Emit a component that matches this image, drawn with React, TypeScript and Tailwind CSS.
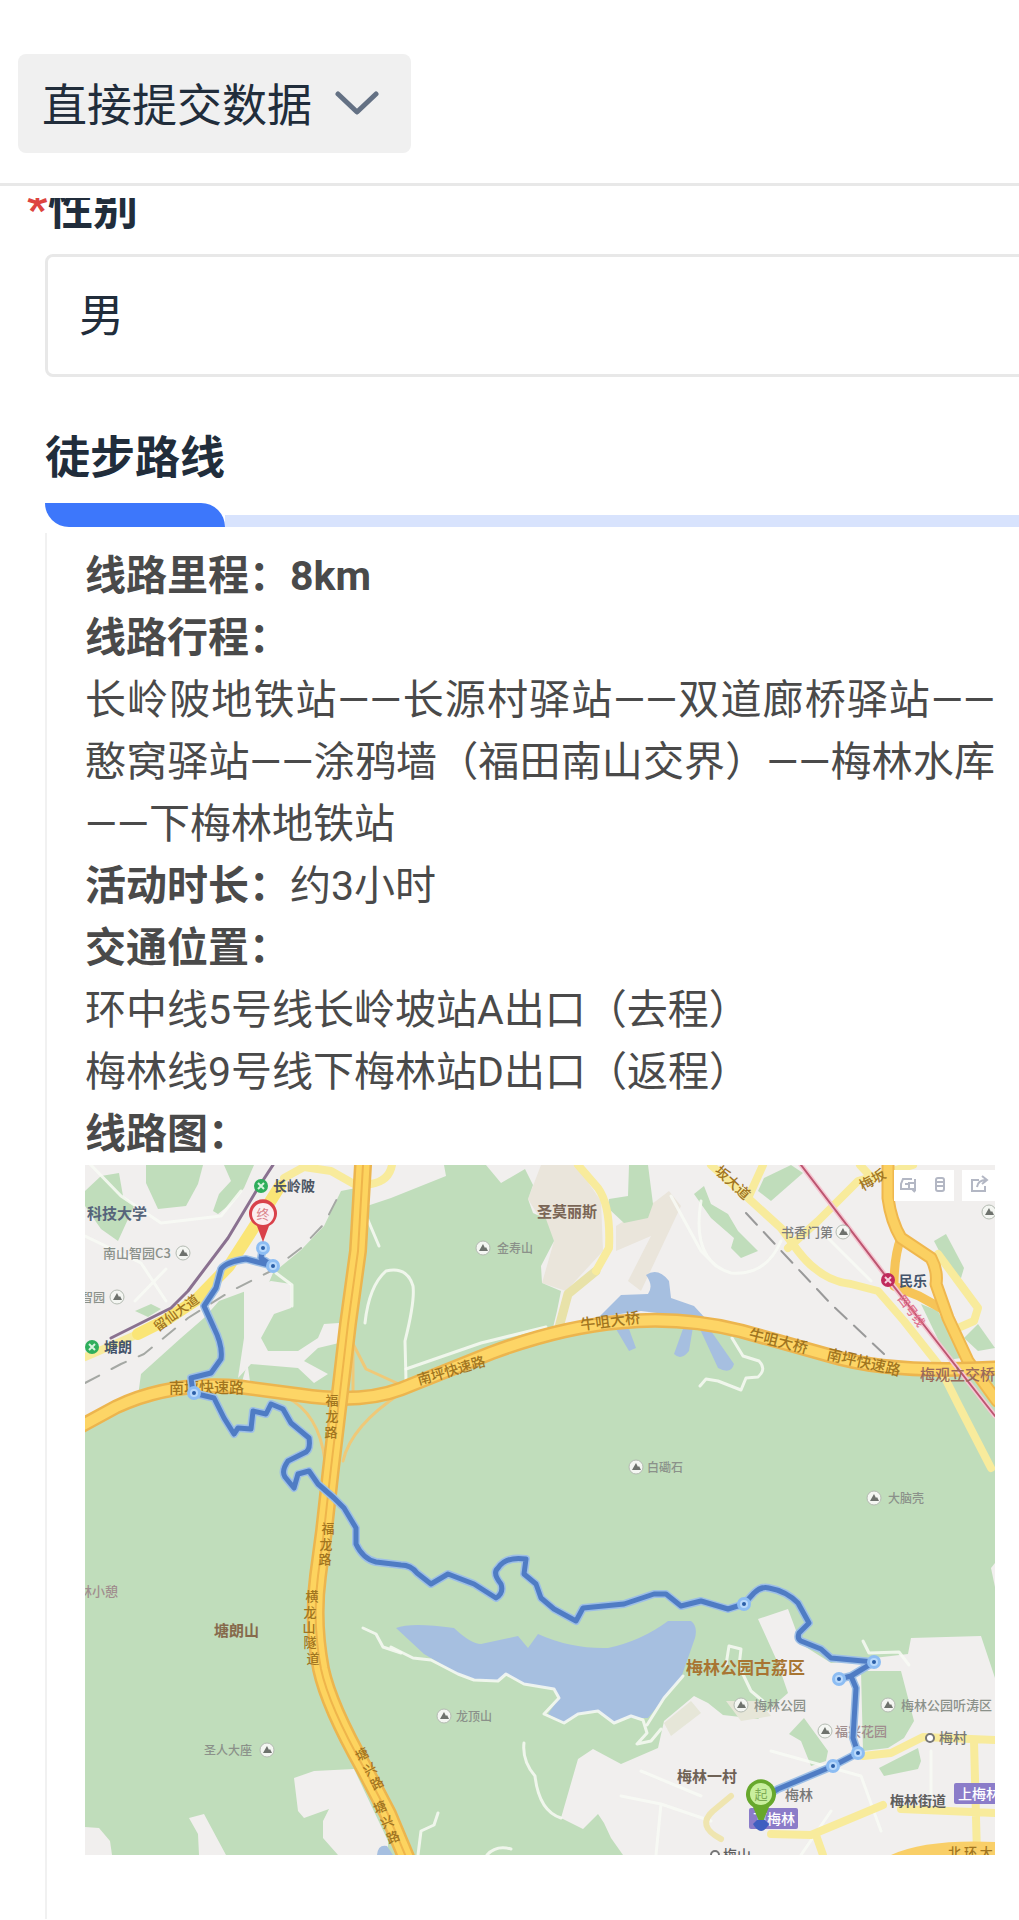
import { useState } from "react"

type Point = [number, number]

type MapLabel = {
  text: string;
  x: number;
  y: number;
  size: number;
  color: string;
  bold?: boolean;
  rotate?: number;
}

const GREEN = "#c0ddbb";
const URBAN = "#f1efee";
const GREY = "#8b918a";
const BROWN = "#a1751f";

const labels: MapLabel[] = [
  { text: "长岭陂", x: 272, y: 1190, size: 14, color: "#4c5563", bold: true },
  { text: "科技大学", x: 86, y: 1218, size: 15, color: "#56647a", bold: true },
  { text: "南山智园C3", x: 102, y: 1257, size: 13, color: GREY },
  { text: "智园", x: 80, y: 1301, size: 12, color: GREY },
  { text: "塘朗", x: 103, y: 1351, size: 14, color: "#44546b", bold: true },
  { text: "圣莫丽斯", x: 536, y: 1216, size: 15, color: "#7a6656", bold: true },
  { text: "金寿山", x: 496, y: 1252, size: 12, color: GREY },
  { text: "白磡石", x: 646, y: 1471, size: 12, color: GREY },
  { text: "大脑壳", x: 887, y: 1502, size: 12, color: GREY },
  { text: "民乐", x: 898, y: 1285, size: 14, color: "#44546b", bold: true },
  { text: "书香门第", x: 780, y: 1236, size: 13, color: "#7d7d7d" },
  { text: "梅观立交桥", x: 919, y: 1379, size: 15, color: "#9a6a5a" },
  { text: "林小憩", x: 78, y: 1595, size: 13, color: "#a08e8e" },
  { text: "塘朗山", x: 213, y: 1635, size: 15, color: "#866a4c", bold: true },
  { text: "圣人大座", x: 203, y: 1754, size: 12, color: GREY },
  { text: "龙顶山", x: 455, y: 1720, size: 12, color: GREY },
  { text: "梅林公园古荔区", x: 685, y: 1673, size: 17, color: "#a87532", bold: true },
  { text: "梅林公园", x: 753, y: 1709, size: 13, color: GREY },
  { text: "梅林公园听涛区", x: 900, y: 1709, size: 13, color: GREY },
  { text: "福兴花园", x: 834, y: 1735, size: 13, color: "#a08e8e" },
  { text: "梅村", x: 938, y: 1742, size: 14, color: "#777777" },
  { text: "梅林一村", x: 676, y: 1781, size: 15, color: "#6f6256", bold: true },
  { text: "梅林", x: 784, y: 1799, size: 14, color: "#777777" },
  { text: "梅林街道", x: 889, y: 1805, size: 14, color: "#5e5e5e", bold: true },
  { text: "梅山", x: 722, y: 1859, size: 14, color: "#5e5e5e" },
  { text: "北 环 大", x: 947, y: 1856, size: 13, color: BROWN },
  { text: "南坪快速路", x: 168, y: 1392, size: 15, color: BROWN },
  { text: "南坪快速路", x: 418, y: 1384, size: 14, color: BROWN, rotate: -16 },
  { text: "牛咀大桥", x: 580, y: 1329, size: 15, color: BROWN, rotate: -7 },
  { text: "牛咀大桥", x: 747, y: 1338, size: 15, color: BROWN, rotate: 14 },
  { text: "南坪快速路", x: 825, y: 1358, size: 15, color: BROWN, rotate: 13 },
  { text: "留仙大道", x: 157, y: 1331, size: 13, color: BROWN, rotate: -36 },
  { text: "坂大道", x: 713, y: 1171, size: 14, color: BROWN, rotate: 43 },
  { text: "梅坂", x: 862, y: 1190, size: 14, color: BROWN, rotate: -30 },
  { text: "四号线", x: 896, y: 1298, size: 12, color: "#e0708c", rotate: 53 },
];

// road names that follow the road one character at a time
const roadChars: [string, number, number, number][] = [
  ["福", 331, 1399, 0], ["龙", 331, 1415, 0], ["路", 330, 1431, 0],
  ["福", 327, 1527, 0], ["龙", 325, 1543, 0], ["路", 324, 1558, 0],
  ["横", 311, 1595, 0], ["龙", 309, 1611, 0], ["山", 308, 1626, 0], ["隧", 309, 1641, 0], ["道", 312, 1657, 0],
  ["塘", 361, 1753, -28], ["兴", 369, 1768, -28], ["路", 376, 1782, -28],
  ["塘", 379, 1806, -22], ["兴", 386, 1821, -22], ["路", 392, 1836, -22],
];

const peaks: Point[] = [
  [182, 1252], [116, 1296], [482, 1247], [635, 1466], [873, 1497], [842, 1231], [266, 1749],
  [443, 1715], [740, 1704], [887, 1704], [824, 1730], [988, 1211],
];

const stops: Point[] = [
  [262, 1247], [272, 1265], [193, 1392], [743, 1603], [873, 1661], [838, 1678], [857, 1752], [832, 1765],
];

const greenAreas = [
  "M145 1164H202L197 1183 185 1205 157 1208 145 1182z",
  "M223 1164H253L243 1187 233 1200 217 1213 212 1210 218 1193 230 1180z",
  "M84 1190L100 1175 118 1172 122 1195 133 1205 117 1240 100 1228 84 1205z",
  "M134 1310L150 1303 160 1308 147 1316z",
  "M218 1300L245 1290 243 1337 250 1350 240 1384 167 1388 137 1395 140 1373 180 1337 203 1317z",
  "M272 1272L300 1249 323 1225 340 1190 360 1186 350 1320 342 1395 250 1388 243 1337 260 1300z",
  "M366 1205L390 1197 445 1175 443 1164H485L500 1182 524 1168 532 1184 527 1198 532 1212 545 1218 553 1240 540 1265 541 1282 560 1290 556 1310 550 1335 500 1352 400 1388 342 1398z",
  "M628 1164H647L652 1203 647 1217 623 1222 607 1207 608 1198 627 1195z",
  "M763 1177L790 1164 802 1172 770 1200 757 1190z",
  "M693 1193L703 1185 710 1203 727 1213 737 1230 757 1250 740 1257 730 1247 733 1237 710 1217z",
  "M933 1240L945 1233 963 1267 960 1277 950 1273z",
  "M963 1337L977 1323 994 1347 977 1350z",
  "M920 1303L937 1310 960 1357 947 1359z",
  "M84 1422L170 1388 240 1385 340 1395 400 1390 490 1352 560 1332 620 1322 680 1320 760 1334 860 1362 900 1371 994 1372V1854H84z",
];

const urbanAreas = [
  "M243 1290L270 1280 290 1283V1307L273 1313 260 1337 267 1350 297 1350 317 1337 323 1323 338 1322V1342L317 1347 303 1360 327 1373 313 1382 297 1367 250 1363 237 1377 243 1337z",
  "M757 1618L787 1608 800 1643 830 1662 873 1657 907 1653 910 1637 980 1635 994 1677V1854H622L610 1837 603 1822 597 1813 582 1828 560 1817 577 1758 592 1748 620 1763 657 1747 663 1720 693 1695 707 1702 722 1714 757 1718 787 1692 776 1660z",
  "M293 1777L313 1770 353 1768 387 1840V1854H337L322 1837V1820L328 1808 303 1817 297 1810z",
  "M84 1826L98 1827 109 1840 111 1854H84z",
  "M188 1817L203 1813 225 1854H198L197 1833z",
  "M990 1567L994 1562V1586z",
];

const waterAreas = [
  "M395 1627Q410 1621 453 1627Q470 1643 480 1643L517 1635 527 1647 537 1633Q570 1648 607 1647Q640 1640 667 1620L690 1620Q697 1625 694 1637L680 1677 647 1717 623 1717 613 1722 597 1710 577 1713 563 1722 547 1713 558 1697 553 1688 523 1683 505 1673 497 1680 473 1678 457 1673 423 1653z",
  "M598 1316L620 1294 647 1293Q653 1285 645 1274Q657 1266 668 1280L670 1297 693 1305 705 1318 640 1310z",
  "M615 1328L628 1328 635 1347 628 1350z",
  "M683 1325L692 1326 688 1350Q680 1360 673 1353z",
  "M698 1326L710 1330 733 1363Q730 1374 717 1367z",
  "M376 1854Q377 1843 386 1845L392 1854z",
];

const footPaths = [
  "M390 1646L412 1657 430 1659 457 1673 473 1679 497 1680 505 1673 523 1683 553 1688 558 1697 543 1713 563 1722 577 1713 597 1710 613 1722 630 1715 642 1719 646 1732 636 1743 650 1740 660 1728",
  "M646 1724L663 1697 682 1675",
  "M523 1742Q521 1760 534 1775Q538 1810 560 1817",
  "M417 1854L420 1830 433 1824 437 1812",
  "M486 1854Q495 1844 510 1848",
  "M362 1627L375 1633 382 1646 400 1652",
  "M731 1337L742 1355 758 1360Q766 1368 757 1376L745 1377 740 1389 717 1380 705 1378 699 1385",
  "M361 1205L378 1245",
  "M405 1380L404 1340Q414 1300 412 1285Q406 1265 385 1270Q368 1285 364 1322",
  "M291 1305V1284L275 1272",
  "M405 1368L480 1342 545 1326",
  "M725 1664L728 1645 740 1648 738 1665 750 1690 762 1700",
  "M862 1640L868 1652 898 1651 908 1664",
  "M84 1235L140 1262 165 1300M134 1300L165 1268",
  "M86 1160L120 1195 160 1222 220 1215 240 1190",
  "M620 1795L660 1803 710 1820M660 1803L655 1854M640 1770L700 1795M770 1750L860 1775 880 1830M930 1750V1800M800 1854L830 1810",
  "M700 1200Q690 1260 730 1272Q765 1275 780 1240M820 1230L870 1280M670 1195L700 1250 715 1265",
];

const yellowRoads = [
  "M279 1185L257 1220 228 1265 195 1299 165 1319 137 1333 84 1356",
  "M577 1164L597 1187Q610 1205 608 1247L595 1270",
  "M710 1164L747 1197 780 1227 797 1250Q820 1280 850 1283L877 1290 903 1320 937 1363 957 1403 990 1467",
  "M912 1164L857 1180 817 1220 787 1247",
  "M762 1164L748 1195",
  "M859 1164L872 1178",
  "M937 1253L957 1280 977 1307 973 1320 957 1327",
  "M770 1833L810 1834 882 1804M815 1834L822 1854",
  "M862 1755L890 1752 922 1736 994 1739M973 1740L976 1854M900 1808L994 1812",
  "M283 1177L303 1166 330 1170 353 1183M370 1183Q388 1180 391 1164",
];

const nsFreeway = "M362 1164L357 1250 347 1323 340 1383 330 1467 323 1530 317 1575Q311 1620 320 1668Q328 1705 363 1767L387 1813 405 1856";
const ewFreeway = "M82 1424L115 1406Q170 1380 240 1386L300 1394Q360 1403 400 1388L490 1352Q560 1326 620 1321Q680 1315 740 1330L830 1355Q890 1373 996 1367";
const eastFreeway = "M887 1164V1197Q890 1220 900 1237L930 1257Q937 1270 935 1283L947 1317 967 1360 996 1400";

const route = "M262 1245L260 1257 272 1265 245 1258Q225 1261 220 1268L215 1287 203 1305 213 1327Q222 1345 220 1358L210 1372 190 1377 192 1392 213 1397 223 1417 233 1433 237 1427 250 1428 252 1410 265 1413 270 1403 282 1408 290 1422 308 1437Q310 1450 303 1452L287 1460Q280 1470 284 1476L293 1487 297 1473 308 1470 317 1483 333 1497 343 1507 355 1527V1543Q362 1558 375 1561L400 1564Q410 1564 416 1572L430 1583 447 1573 473 1583 495 1597Q503 1592 500 1583Q491 1572 497 1567Q505 1555 525 1558L523 1573 535 1583 540 1597 553 1608 575 1620 582 1607 623 1603 653 1593 665 1593 680 1605 700 1600 727 1608 743 1603 753 1592Q760 1585 768 1587Q785 1590 797 1602L808 1622 798 1632Q796 1638 800 1640L820 1648 830 1657 873 1661 850 1675 838 1678M850 1675L855 1687 852 1737 857 1752 832 1765 777 1788 762 1797 760 1826";

function RouteMap() {
  return (
    <svg viewBox="84 1164 910 690" className="block w-full h-auto font-['Noto_Sans_CJK_SC',sans-serif]" role="img" aria-label="线路图">
      <rect x="84" y="1164" width="910" height="690" fill={URBAN} />
      <path d="M527 1198L540 1164H575L600 1200 602 1250 565 1290 541 1282 553 1240zM655 1200L668 1190 680 1205 640 1290 627 1280 650 1235 615 1250 615 1225z" fill="#eae5db" />
      {greenAreas.map((d) => <path key={d} d={d} fill={GREEN} />)}
      {urbanAreas.map((d) => <path key={d} d={d} fill={URBAN} />)}
      <path d="M860 1670L900 1670 913 1720 903 1737 887 1747 862 1750zM803 1717L827 1750 825 1760 810 1765 800 1740 788 1733zM878 1767L917 1747 920 1760 917 1768 883 1775z" fill={GREEN} />
      <path d="M725 1700L740 1720 770 1715 757 1700zM663 1722L690 1700 700 1712 670 1735z" fill="#e6e6d8" />
      {waterAreas.map((d) => <path key={d} d={d} fill="#a6bfe0" />)}

      <g fill="none" strokeLinecap="round" strokeLinejoin="round">
        {footPaths.map((d) => <path key={d} d={d} stroke="#f8faf4" strokeWidth="3" opacity="0.85" />)}
        <path d="M595 1270L567 1293 557 1330" stroke="#e8e2a9" strokeWidth="9" />
        {yellowRoads.map((d) => <path key={d} d={d} stroke="#f8eb9c" strokeWidth="8" />)}
        <path d="M279 1185L257 1220 228 1265 195 1299 165 1319 137 1333" stroke="#fae576" strokeWidth="12" />
        <path d="M720 1838Q695 1825 712 1810L730 1795" stroke="#efe5b0" strokeWidth="6" />
        <path d="M349 1337L365 1368 400 1384M342 1460Q350 1425 400 1392M352 1345V1395L390 1396M285 1396Q318 1412 324 1460" stroke="#efc978" strokeWidth="3" />
        <path d="M84 1382L120 1363 143 1353 187 1317 230 1290 270 1270 300 1247 323 1223 340 1190" stroke="#a5a8a4" strokeWidth="2" strokeDasharray="16 14" />
        <path d="M745 1212L785 1255 830 1303 883 1353" stroke="#999999" strokeWidth="2" strokeDasharray="16 10" />
        <path d="M272 1164L257 1187 227 1237 187 1290 170 1307 110 1337" stroke="#8a7190" strokeWidth="3" />

        <path d="M900 1237Q893 1255 893 1285L918 1295 945 1310" stroke="#f6c458" strokeWidth="9" />
        <path d={eastFreeway} stroke="#efb74e" strokeWidth="13" />
        <path d={eastFreeway} stroke="#fbd061" strokeWidth="9" />
        <path d={ewFreeway} stroke="#ecb54e" strokeWidth="15" />
        <path d={ewFreeway} stroke="#fdd566" strokeWidth="10" />
        <path d={nsFreeway} stroke="#ecb54e" strokeWidth="18" />
        <path d={nsFreeway} stroke="#fdd45f" strokeWidth="13" />
        <path d={nsFreeway} stroke="#efb54b" strokeWidth="2" />
        <path d="M800 1164L887 1278 940 1346 994 1415" stroke="#f4c7d2" strokeWidth="5" />
        <path d="M800 1164L887 1278 940 1346 994 1415" stroke="#bd5570" strokeWidth="2" />
      </g>
      <path d="M890 1854Q925 1838 994 1841V1854z" fill="#f9cf68" />

      {peaks.map(([x, y]) => (
        <g key={`${x}-${y}`}>
          <circle cx={x} cy={y} r="7" fill="#f4f6f2" stroke="#b4bbb2" />
          <path d={`M${x - 4} ${y + 3}l4-7 2 4 1-1 2 4z`} fill="#6e726d" />
        </g>
      ))}
      {labels.map((l) => (
        <text
          key={`${l.text}-${l.x}`}
          x={l.x}
          y={l.y}
          fontSize={l.size}
          fill={l.color}
          fontWeight={l.bold ? 700 : 500}
          transform={l.rotate ? `rotate(${l.rotate} ${l.x} ${l.y})` : undefined}
        >
          {l.text}
        </text>
      ))}
      {roadChars.map(([c, x, y, r]) => (
        <text key={`${c}-${y}`} x={x} y={y + 5} fontSize="13" fontWeight="500" fill={BROWN} textAnchor="middle" transform={`rotate(${r} ${x} ${y})`}>{c}</text>
      ))}

      {/* metro stations */}
      <circle cx="260" cy="1185" r="7" fill="#2fae5c" />
      <path d="M257 1182l6 6m0-6l-6 6" stroke="#d8f3df" strokeWidth="2" />
      <circle cx="91" cy="1346" r="7" fill="#2fae5c" />
      <path d="M88 1343l6 6m0-6l-6 6" stroke="#d8f3df" strokeWidth="2" />
      <circle cx="887" cy="1279" r="7" fill="#c02a5c" />
      <path d="M884 1276l6 6m0-6l-6 6" stroke="#f6cfdc" strokeWidth="2" />
      <circle cx="929" cy="1737" r="4" fill="#ffffff" stroke="#777777" strokeWidth="2" />
      <circle cx="714" cy="1854" r="4" fill="#ffffff" stroke="#777777" strokeWidth="2" />
      <rect x="748" y="1807" width="49" height="21" rx="2" fill="#8b7cc9" />
      <text x="752" y="1823" fontSize="14" fontWeight="500" fill="#ffffff">下梅林</text>
      <rect x="953" y="1782" width="50" height="21" rx="2" fill="#8b7cc9" />
      <text x="957" y="1798" fontSize="14" fontWeight="500" fill="#ffffff">上梅林</text>

      <path d={route} fill="none" stroke="#9dbfe6" strokeWidth="8" strokeLinejoin="round" />
      <path d={route} fill="none" stroke="#4f7cc4" strokeWidth="5" strokeLinejoin="round" />
      {stops.map(([x, y]) => (
        <g key={`${x}-${y}`}>
          <circle cx={x} cy={y} r="7" fill="#8dbdf3" />
          <circle cx={x} cy={y} r="4" fill="#b9d9fb" />
          <circle cx={x} cy={y} r="2" fill="#2b5fa8" />
        </g>
      ))}

      {/* finish and start pins */}
      <path d="M262 1241L256 1225A14 14 0 1 1 268 1225z" fill="#d9414a" />
      <circle cx="262" cy="1213" r="11" fill="#fbeef0" />
      <text x="262" y="1218" fontSize="13" fill="#d98088" textAnchor="middle">终</text>
      <path d="M760 1825L752 1806A15 15 0 1 1 768 1806z" fill="#67a82c" />
      <circle cx="760" cy="1793" r="11" fill="#c9ef9e" />
      <text x="760" y="1798" fontSize="13" fill="#7dab55" textAnchor="middle">起</text>
      <path d="M752 1823q8 14 16 0l-4-4h-8z" fill="#3f5fc0" />

      {/* map toolbar */}
      <rect x="893" y="1169" width="60" height="31" fill="#ffffff" />
      <rect x="961" y="1169" width="33" height="31" fill="#ffffff" />
      <g fill="none" stroke="#b3b7c4" strokeWidth="2">
        <path d="M911 1178h-9l-2 5v5h9M904 1183h5M914 1178v12M908 1182h6v6h-6zM911 1188l3 3" />
        <rect x="935" y="1177" width="8" height="13" rx="2" />
        <path d="M936 1181h6M936 1185h6" />
        <path d="M978 1179h-7v11h13v-5M976 1186q1-7 9-7M981 1175l5 4-5 4" />
      </g>
    </svg>
  )
}

export default function App() {

  const [sexo, setSexo] = useState("男");

  return (
    <div className="overflow-x-hidden bg-white text-[#212d3b] font-['Noto_Sans_CJK_SC',sans-serif]">
      <header className="border-b-[3px] border-[#e8e8e8] pt-[54px] pb-[30px] pl-[18px]">
        <button type="button" className="flex h-[99px] items-center gap-[23px] rounded-lg bg-[#f0f0f0] pl-6 pr-8 pb-[2px] text-[45px] leading-[60px]">
          直接提交数据
          <svg viewBox="0 0 44 26" className="w-11 h-[26px]" fill="none" stroke="#647184" strokeWidth="5" strokeLinecap="round" strokeLinejoin="round" aria-hidden="true">
            <path d="M3 4l19 18L41 4" />
          </svg>
        </button>
      </header>

      <main className="mt-3 overflow-hidden pl-[45px]">
        <label htmlFor="gender" className="-ml-[18px] -mt-[22px] flex text-[45px] leading-[60px] font-bold">
          <span className="w-[21px] pt-1 text-[#dd4440] font-[Roboto,sans-serif]">*</span>性别
        </label>
        <input
          id="gender"
          name="gender"
          value={sexo}
          onChange={(e) => setSexo(e.target.value)}
          className="mt-[14px] block h-[123px] w-[110%] rounded-lg border-[3px] border-[#e8e8e8] bg-white pl-[31px] pb-[6px] text-[45px] leading-[60px] outline-none"
        />

        <h2 className="mt-12 text-[45px] leading-[60px] font-bold">徒步路线</h2>
        <div className="mt-[18px] flex items-end">
          <div className="h-6 w-[180px] rounded-tr-3xl rounded-bl-3xl bg-[#3d77fb]" />
          <div className="h-3 flex-1 bg-[#d8e3fd]" />
        </div>

        <section className="mt-[6px] border-l-2 border-[#f1f1f1] pt-3 pr-6 pb-16 pl-[38px]">
          <div className="text-justify text-[41px] leading-[62px] text-[#4a4a4a] font-[Roboto,'Noto_Sans_CJK_SC',sans-serif]">
            <p><b>线路里程：8km</b></p>
            <p><b>线路行程：</b></p>
            <p>长岭陂地铁站——长源村驿站——双道廊桥驿站——憨窝驿站——涂鸦墙（福田南山交界）——梅林水库——下梅林地铁站</p>
            <p><b>活动时长：</b>约3小时</p>
            <p><b>交通位置：</b></p>
            <p>环中线5号线长岭坡站A出口（去程）</p>
            <p>梅林线9号线下梅林站D出口（返程）</p>
            <p><b>线路图：</b></p>
          </div>
          <RouteMap />
        </section>
      </main>
    </div>
  )
}
